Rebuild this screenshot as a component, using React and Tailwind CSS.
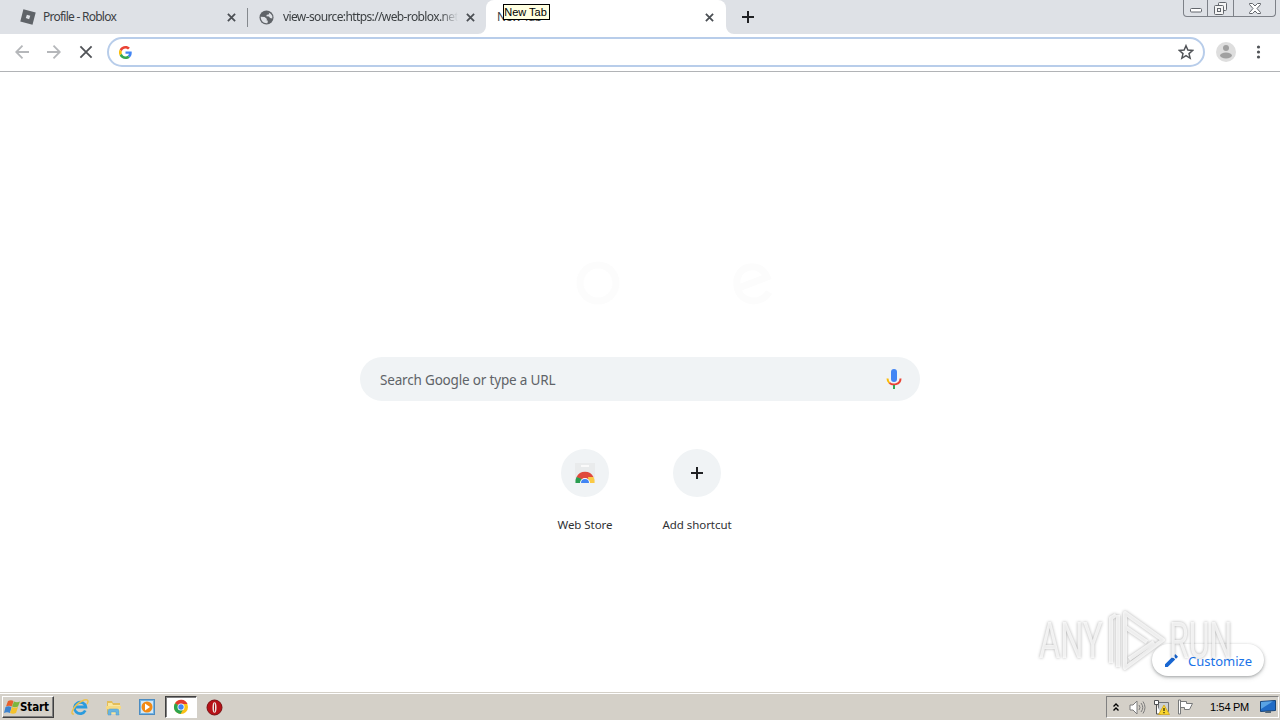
/* ── Small shared glyphs ── */

function Cross({ size = 10, className = "", width = 2 }) {
  return (
    <svg width={size} height={size} viewBox="0 0 10 10" className={className} fill="none" stroke="currentColor" strokeWidth={width}>
      <path d="M1 1l8 8M9 1L1 9" />
    </svg>
  );
}

function Plus({ size = 12 }) {
  return (
    <svg width={size} height={size} viewBox="0 0 12 12" fill="none" stroke="#202124" strokeWidth="2">
      <path d="M6 0v12M0 6h12" />
    </svg>
  );
}

function GoogleG() {
  return (
    <svg width="13" height="13" viewBox="0 0 48 48">
      <path fill="#EA4335" d="M24 9.5c3.5 0 6.7 1.2 9.2 3.6l6.9-6.9C35.9 2.4 30.5 0 24 0 14.6 0 6.5 5.4 2.6 13.2l8 6.2C12.4 13.7 17.7 9.5 24 9.5z" />
      <path fill="#4285F4" d="M47 24.6c0-1.6-.2-3.1-.4-4.6H24v9h12.9c-.6 3-2.2 5.5-4.7 7.2l7.7 6C44.4 38 47 32 47 24.6z" />
      <path fill="#FBBC05" d="M10.5 28.6A14.500 14.500 0 0 1 10.500 19.400l-8-6.2a24 24 0 0 0 0 21.600z" />
      <path fill="#34A853" d="M24 48c6.500 0 11.900-2.100 15.900-5.800l-7.700-6c-2.200 1.500-4.900 2.300-8.200 2.300-6.300 0-11.600-4.200-13.500-9.900l-8 6.200C6.500 42.600 14.600 48 24 48z" />
    </svg>
  );
}

function Globe() {
  return (
    <svg width="15" height="15" viewBox="0 0 16 16">
      <circle cx="8" cy="8" r="7.500" fill="#5f6368" />
      <path fill="#dee1e6" d="M1.800 7.200l4.200.300 2.500 2-.500 1.500 1.500.500-.5 2.500C5 14.500 2 12 1.800 7.200zM8.500 2l2.600.9-.8 1.800-2 .4-.5 1.600 2.800.2 1.200 1.700 2.300.4.100-2.500-1.500-2.300-2-1.600z" />
    </svg>
  );
}

/* ── Browser chrome ── */

function TabStrip() {
  return (
    <div className="relative flex h-[34px] bg-[#dee1e6] text-[12px] text-[#3c4043]">
      <div className="flex w-[247px] items-center pl-5">
        <svg width="16" height="16" viewBox="0 0 16 16">
          <path fill="#5f6368" fillRule="evenodd" d="M3.400.300L15.700 3.500 12.500 15.700.300 12.500zM6.900 5.700L5.800 9l3.300 1.200L10.300 6.800z" />
        </svg>
        <span className="ml-[7px] w-[184px] whitespace-nowrap tracking-[-0.750px]">Profile - Roblox</span>
        <Cross size={9} className="text-[#4b4f54]" />
      </div>
      <div className="mt-2 h-[19px] w-px bg-[#85898e]" />
      <div className="flex w-[238px] items-center pl-[11px]">
        <Globe />
        <span className="ml-[9px] w-[175px] whitespace-nowrap tracking-[-0.620px] [mask-image:linear-gradient(to_right,black_90%,transparent)]">
          view-source:https://web-roblox.net/
        </span>
        <Cross size={9} className="ml-2 text-[#4b4f54]" />
      </div>
      <div className="relative flex w-60 items-center rounded-t-lg bg-white pl-[11px]">
        <svg width="8" height="8" className="absolute bottom-0 -left-2"><path d="M8 0v8H0a8 8 0 0 0 8-8" fill="#fff" /></svg>
        <svg width="8" height="8" className="absolute bottom-0 -right-2"><path d="M0 0v8h8a8 8 0 0 1-8-8" fill="#fff" /></svg>
        <span className="w-[208px] tracking-[-0.500px]">New Tab</span>
        <Cross size={9} className="text-[#4b4f54]" />
        <div className="absolute top-1 left-[17px] flex h-4 w-[47px] items-center justify-center border border-black bg-[#ffffe1] pr-[2px] whitespace-nowrap font-['Liberation_Sans',sans-serif] text-[11px] text-black">
          New Tab
        </div>
      </div>
      <div className="flex items-center pl-4"><Plus size={12} /></div>
      <WindowButtons />
    </div>
  );
}

function WindowButtons() {
  return (
    <div className="mr-1 ml-auto flex h-[17px] rounded-b-[4px] border border-t-0 border-[#7d8188] text-[#62666c]">
      <div className="flex w-6 items-end justify-center border-r border-[#7d8188] pb-[3px]">
        <svg width="12" height="5" fill="#fff" stroke="currentColor"><rect x=".5" y=".5" width="11" height="3.500" rx="1" /></svg>
      </div>
      <div className="flex w-[26px] items-center justify-center border-r border-[#7d8188]">
        <svg width="13" height="13" fill="#f5f5f5" stroke="currentColor">
          <rect x="4.500" y=".5" width="8" height="8" rx="1" />
          <rect x=".5" y="3.500" width="9" height="9" rx="1" />
          <rect x="3.500" y="6.500" width="3" height="3" />
        </svg>
      </div>
      <div className="flex w-[41px] items-center justify-center">
        <svg width="12" height="11" viewBox="0 0 12 11" fill="#fff" stroke="currentColor">
          <path d="M.5.500h3L6 3l2.500-2.500h3v1L8 5.500l3.500 4v1h-3L6 8l-2.500 2.500h-3v-1L4 5.500.500 1.500z" />
        </svg>
      </div>
    </div>
  );
}

function Toolbar() {
  return (
    <div className="flex h-[38px] items-center border-b border-[#b1b3b6] bg-white pb-px pl-[15px]">
      <svg width="14" height="14" viewBox="0 0 14 14" fill="none" stroke="#b5b7ba" strokeWidth="1.800"><path d="M14 7H1.500M7.500.700L1.200 7l6.300 6.300" /></svg>
      <svg className="ml-[18px]" width="14" height="14" viewBox="0 0 14 14" fill="none" stroke="#b5b7ba" strokeWidth="1.800"><path d="M0 7h12.500M6.500.700L12.800 7l-6.300 6.300" /></svg>
      <Cross size={14} width={1.300} className="ml-[18px] text-[#505357]" />
      <div className="ml-[14px] flex h-[30px] w-[1098px] items-center rounded-full border-2 border-[#b8cdea] pr-[9px] pl-[10px]">
        <GoogleG />
        <svg className="ml-auto" width="16" height="16" viewBox="0 0 24 24" fill="none" stroke="#505357" strokeWidth="2.200"><path d="M12 2.500l2.800 6.600 7.200.6-5.500 4.700 1.700 7L12 17.600l-6.200 3.800 1.700-7L2 9.700l7.200-.6z" /></svg>
      </div>
      <svg className="ml-[11px]" width="20" height="20" viewBox="0 0 20 20">
        <circle cx="10" cy="10" r="10" fill="#dedede" />
        <circle cx="10" cy="6" r="3" fill="#a0a0a0" />
        <ellipse cx="10" cy="13.500" rx="6" ry="2.900" fill="#a0a0a0" />
      </svg>
      <svg className="ml-[20px]" width="5" height="14" fill="#505357"><circle cx="2.500" cy="2" r="1.600" /><circle cx="2.500" cy="7" r="1.600" /><circle cx="2.500" cy="12" r="1.600" /></svg>
    </div>
  );
}

/* ── New tab page ── */

function Mic() {
  return (
    <svg width="16" height="22" viewBox="0 0 16 22" fill="none" strokeWidth="2">
      <rect x="5" y="1" width="6" height="13" rx="3" fill="#4285f4" />
      <path d="M1.500 10.500c0 2 .700 3.400 2 4.500" stroke="#fbbc05" />
      <path d="M3.500 15c3 2.500 11 2 11-4.500" stroke="#ea4335" />
      <path d="M8 17v4" stroke="#34a853" />
    </svg>
  );
}

function WebStore() {
  return (
    <svg width="20" height="22" viewBox="0 0 20 22">
      <path d="M0 1h20v20H0z" fill="#e9ebec" />
      <path d="M6 4h8" stroke="#fff" strokeWidth="1.500" />
      <path d="M1.500 15a9.500 9.500 0 0 1 17 0l-4 3h-9z" fill="#e04a3d" />
      <path d="M1.500 15A10 10 0 0 0 .5 21H6l1-4z" fill="#2a9d50" />
      <path d="M13 15h5.500a10 10 0 0 1 1 6H14z" fill="#fbca45" />
      <path d="M5 21a5 5 0 0 1 10 0z" fill="#fff" />
      <path d="M6 21a4 4 0 0 1 8 0z" fill="#4285f4" />
    </svg>
  );
}

const SHORTCUTS = [
  { label: "Web Store", icon: <WebStore /> },
  { label: "Add shortcut", icon: <Plus size={12} /> },
];

function NewTabPage() {
  return (
    <main className="relative flex h-[620px] flex-col items-center bg-white">
      <svg className="mt-[186px] h-[52px] w-[270px]" fill="none" stroke="#fcfcfc" strokeWidth="7">
        <circle cx="93" cy="25" r="18" />
        <path d="M231 31l31-12c-7-17-33-12-30 9 2 17 24 20 32 6" />
      </svg>
      <div className="mt-[47px] flex h-11 w-[560px] items-center rounded-full bg-[#f0f3f5] pr-[18px] pl-5">
        <span className="mt-[3px] text-[13.5px] tracking-[-0.180px] text-[#5f6368]">Search Google or type a URL</span>
        <span className="ml-auto"><Mic /></span>
      </div>
      <div className="mt-12 ml-[2px] flex">
        {SHORTCUTS.map((s) => (
          <div key={s.label} className="flex w-28 flex-col items-center">
            <div className="flex size-12 items-center justify-center rounded-full bg-[#f0f3f5]">{s.icon}</div>
            <span className="mt-5 text-[11.5px] leading-4 tracking-[-0.050px] text-[#303134]">{s.label}</span>
          </div>
        ))}
      </div>
      <button className="absolute right-4 bottom-4 flex h-8 w-28 items-center rounded-full bg-white pl-[13px] text-[13px] text-[#1a73e8] shadow-[0_1px_3px_rgba(60,64,67,0.4),0_2px_5px_rgba(60,64,67,0.15)]">
        <svg width="13" height="13" viewBox="0 0 13 13" fill="#1967d2"><path d="M0 10.300V13h2.700l7.500-7.500-2.700-2.700zM8.200 2l2.800 2.800 1.600-1.600a.8.8 0 0 0 0-1L10.800.400a.8.800 0 0 0-1 0z" /></svg>
        <span className="mt-[3px] ml-[10px]">Customize</span>
      </button>
      <Watermark />
    </main>
  );
}

function Watermark() {
  return (
    <div className="absolute top-[534px] left-[1039px] flex h-[70px] items-center font-['Roboto',sans-serif] text-[50px] leading-none text-white/75 [filter:drop-shadow(0_0_1.5px_rgba(0,0,0,0.42))]">
      <span className="w-[70px]"><span className="inline-block origin-left scale-x-[0.650]">ANY</span></span>
      <svg width="58" height="64" viewBox="0 0 58 64" fill="none" stroke="currentColor" strokeWidth="4" strokeLinejoin="round">
        <path d="M2 54V9l5-3M9 58V6M16 59V4l38 27-38 28V18l22 15M20 50l25-17" />
      </svg>
      <span className="ml-[2px] w-[66px]"><span className="inline-block origin-left scale-x-[0.640]">RUN</span></span>
    </div>
  );
}

/* ── Taskbar ── */

function WindowsFlag() {
  return (
    <svg width="17" height="17" viewBox="0 0 17 17">
      <path d="M4 2c2-1 4-1 5.500 0L8 7.500c-2-1-4-1-6 0z" fill="#e8602c" />
      <path d="M10 2.500c2 1 4 1 6 0l-2 5c-2 1-4 1-6 0z" fill="#7cb63d" />
      <path d="M1.500 8c2-1 4-1 6 0L6 14c-2-1-4-1-6 0z" fill="#3d83cf" />
      <path d="M8 8c2 1 4 1 6 0l-2 6c-2 1-4 1-6 0z" fill="#f4c22c" />
    </svg>
  );
}

function Explorer() {
  return (
    <svg width="17" height="17" viewBox="0 0 17 17">
      <path d="M2 2h5l1 2h7v11H2z" fill="#e3bd59" />
      <path d="M3 4h4l1 2h7v9H3z" fill="#f9e7a0" />
      <path d="M1 7h15v3H1z" fill="#f6da82" />
      <path d="M3 16v-4q0-2 2-2h7q2 0 2 2v4h-3v-3H6v3z" fill="#69b5e0" stroke="#5099c8" strokeWidth=".5" />
    </svg>
  );
}

function ChromeIcon() {
  return (
    <svg width="16" height="16" viewBox="0 0 16 16">
      <circle cx="8" cy="8" r="7" fill="#fbc116" />
      <path d="M8 8L2 4.300A7 7 0 0 1 14.500 5H8z" fill="#e33b2e" />
      <path d="M8 8L2 4.300A7 7 0 0 0 7.500 15l3.200-5.500z" fill="#2da44e" />
      <circle cx="8" cy="8" r="3.500" fill="#fff" />
      <circle cx="8" cy="8" r="2.700" fill="#4285f4" />
    </svg>
  );
}

function Taskbar() {
  return (
    <footer className="flex h-7 items-center border-t border-[#d4d0c8] bg-[#d4d0c8] pt-px pl-[2px] text-black shadow-[inset_0_1px_0_#fff]">
      <button className="flex h-[22px] w-[52px] items-center border border-t-white border-r-[#404040] border-b-[#404040] border-l-white pl-px shadow-[inset_-1px_-1px_0_#808080]">
        <WindowsFlag />
        <span className="mt-px -ml-px font-['DejaVu_Sans_Condensed','DejaVu_Sans',sans-serif] text-[11.5px] font-bold tracking-[-0.100px]">Start</span>
      </button>
      <svg className="ml-[17px]" width="18" height="18" viewBox="0 0 18 18" fill="none">
        <path d="M14.300 12.500A5.700 5.700 0 1 1 14.800 9H5" stroke="#2b9bdd" strokeWidth="2.800" />
        <path d="M3 16C-2 17 3 7 11 3c6-3 7 0 5 3" stroke="#ecc24e" strokeWidth="1.500" />
      </svg>
      <span className="ml-4"><Explorer /></span>
      <svg className="ml-[17px]" width="16" height="16" viewBox="0 0 16 16">
        <rect x=".5" y=".5" width="15" height="15" fill="#73b4e4" stroke="#4c8cc1" />
        <rect x="2" y="2" width="12" height="12" fill="#d4e8f6" />
        <circle cx="8" cy="8" r="5.500" fill="#f28a14" />
        <path d="M6 4.500v7l5-3.500z" fill="#fff" />
      </svg>
      <div className="ml-[10px] flex h-[22px] w-8 items-center justify-center border border-t-[#404040] border-r-white border-b-white border-l-[#404040] bg-white shadow-[inset_1px_1px_0_#808080]">
        <ChromeIcon />
      </div>
      <svg className="ml-[9px]" width="17" height="17" viewBox="0 0 17 17">
        <circle cx="8.500" cy="8.500" r="7.500" fill="#b71117" stroke="#771013" />
        <ellipse cx="8.500" cy="8.500" rx="2" ry="5.300" fill="#efe5df" />
        <ellipse cx="8.500" cy="8.500" rx=".5" ry="4.500" fill="#9b0b10" />
      </svg>
      <Tray />
    </footer>
  );
}

function Tray() {
  return (
    <div className="mr-[1px] ml-auto flex h-[22px] w-[173px] items-center border border-t-[#808080] border-r-white border-b-white border-l-[#808080] pl-[6px]">
      <svg width="6" height="9" viewBox="0 0 6 9" fill="none" stroke="#000" strokeWidth="1.400"><path d="M.5 3.500L3 1l2.500 2.500M.5 7.500L3 5l2.500 2.500" /></svg>
      <svg className="ml-[10px]" width="17" height="15" viewBox="0 0 17 15" fill="none" stroke="#7c7c7c">
        <path d="M1 5h3l4-4v13l-4-4H1z" fill="#fff" />
        <path d="M10 5q2 2.500 0 5M12 3q3.500 4.500 0 9M14 1.500q4 6 0 12" />
      </svg>
      <svg className="ml-[7px]" width="17" height="16" viewBox="0 0 17 16">
        <path d="M5.500 3.500h10v9h-10z" fill="#ccd0d1" stroke="#707477" />
        <path d="M1.500 1.500h4v4h-4zM3.500 5v10H8" fill="#fff" stroke="#4e5052" />
        <path d="M11 6l5.500 9.500h-11z" fill="#f9d62c" stroke="#ce9f10" strokeWidth=".7" />
        <path d="M11 9v3M11 13v1.300" stroke="#26200a" strokeWidth="1.200" />
      </svg>
      <svg className="ml-[7px]" width="17" height="16" viewBox="0 0 17 16" fill="#fff" stroke="#77797a">
        <path d="M1.500 1v14h2V1zM3.500 2.500h6v2h6l-3 6h-5v-2h-4z" />
      </svg>
      <span className="ml-4 w-[44px] whitespace-nowrap font-['Liberation_Sans',sans-serif] text-[11px] tracking-[-0.300px]">1:54 PM</span>
      <svg className="ml-[6px] shrink-0" width="16" height="14" viewBox="0 0 16 14">
        <path d="M.5 1.500l15-1v10l-15 1z" fill="#206bc6" stroke="#174478" />
        <path d="M1 2l12-.7L1 9z" fill="#59a3e4" />
        <path d="M6 11h5v2H5z" fill="#526677" />
      </svg>
    </div>
  );
}

export default function App() {
  return (
    <div className="h-[720px] w-[1280px] overflow-hidden bg-white font-['Noto_Sans',sans-serif]">
      <TabStrip />
      <Toolbar />
      <NewTabPage />
      <Taskbar />
    </div>
  );
}
